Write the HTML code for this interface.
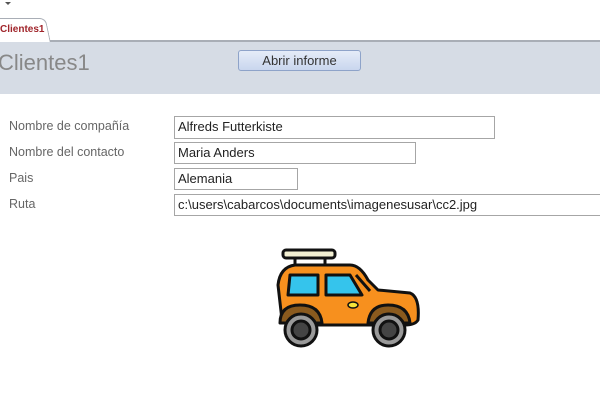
<!DOCTYPE html>
<html><head><style>
body{margin:0;width:600px;height:415px;background:#fff;font-family:"Liberation Sans",sans-serif;position:relative;overflow:hidden}
.a{position:absolute}
.lbl{position:absolute;left:9px;font-size:12.5px;color:#666}
.box{position:absolute;left:174px;height:20px;border:1px solid #a6a6a6;box-sizing:border-box;font-size:13px;color:#222;padding:2px 3px;line-height:15px;white-space:nowrap;overflow:hidden}
</style></head><body>
<div class="a" style="left:5px;top:2px;width:0;height:0;border-left:3px solid transparent;border-right:3px solid transparent;border-top:3px solid #555"></div>
<div class="a" style="left:0;top:40px;width:600px;height:2px;background:#a9aeb6"></div>
<div class="a" style="left:0;top:18px;width:50px;height:24px;background:#fff;border:1px solid #a9aeb6;border-left:none;border-bottom:none;border-radius:0 6px 0 0;transform:skewX(12deg);transform-origin:bottom"></div>
<div class="a" style="left:0;top:24px;font-size:10px;font-weight:bold;color:#a0242a">Clientes1</div>
<div class="a" style="left:0;top:42px;width:600px;height:52px;background:#d6dce5"></div>
<div class="a" style="left:-2px;top:50px;font-size:22px;color:#888">Clientes1</div>
<div class="a" style="left:238px;top:50px;width:123px;height:21px;box-sizing:border-box;border:1px solid #8ea3c9;border-radius:3px;background:linear-gradient(#e5ecf8,#c9d6ee);font-size:13px;color:#333;text-align:center;line-height:19px">Abrir informe</div>
<div class="lbl" style="top:119px">Nombre de compañía</div>
<div class="lbl" style="top:145px">Nombre del contacto</div>
<div class="lbl" style="top:171px">Pais</div>
<div class="lbl" style="top:197px">Ruta</div>
<div class="box" style="top:116px;width:321px;height:23px">Alfreds Futterkiste</div>
<div class="box" style="top:142px;width:242px;height:22px">Maria Anders</div>
<div class="box" style="top:168px;width:124px;height:22px">Alemania</div>
<div class="box" style="top:194px;width:430px;height:22px">c:\users\cabarcos\documents\imagenesusar\cc2.jpg</div>
<svg class="a" style="left:270px;top:245px" width="155" height="110" viewBox="0 0 155 110">
<g stroke="#111" stroke-width="3" stroke-linejoin="round">
<rect x="13" y="5" width="52" height="8" rx="3" fill="#f2efd2"/>
<path d="M25 13v8M55 13v8"/>
<path d="M12 75 L8 40 Q10 22 25 20 L80 20 Q90 20 98 35 L108 45 L140 48 Q150 52 148 75 Q145 80 135 80 L20 80 Z" fill="#f7901e"/>
<path d="M18 50 L20 30 L48 30 L48 50 Z" fill="#35c4ec"/>
<path d="M56 50 L56 30 L80 30 L92 50 Z" fill="#35c4ec"/>
<path d="M86 30 L100 46" />
<path d="M10 78 Q10 60 30 60 Q50 60 52 78 Z" fill="#8a5a1e"/>
<path d="M98 78 Q100 60 118 60 Q138 60 140 78 Z" fill="#8a5a1e"/>
<circle cx="31" cy="85" r="16" fill="#9a9a9a"/><circle cx="31" cy="85" r="9" fill="#444"/>
<circle cx="119" cy="85" r="16" fill="#9a9a9a"/><circle cx="119" cy="85" r="9" fill="#444"/>
</g>
<ellipse cx="83" cy="60" rx="5" ry="3" fill="#f5e43a" stroke="#111" stroke-width="1.5"/>
</svg>
</body></html>
